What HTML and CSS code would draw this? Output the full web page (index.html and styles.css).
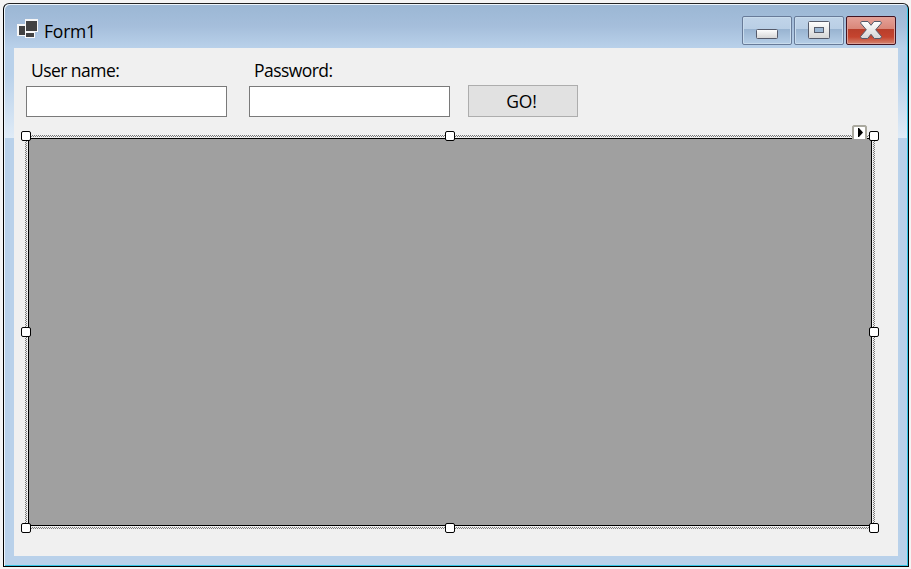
FILE: index.html
```
<!DOCTYPE html>
<html lang="en">
<head>
<meta charset="utf-8">
<title>Form1</title>
<link rel="stylesheet" href="styles.css">
</head>
<body>
<main class="window">
  <header class="titlebar">
    <svg class="app-icon" width="22" height="20" viewBox="0 0 22 20" shape-rendering="crispEdges">
      <path fill="#f7f7f7" d="M0 5h8V0h13v13h-3v6H8v-2H0z"/>
      <path fill="#424242" d="M9 2h11v10H9zM2 7h6v9H2zM9 14h8v4H9z"/>
    </svg>
    <h1 class="title">Form1</h1>
    <div class="controls">
      <button class="control" aria-label="Minimize">
        <svg width="50" height="29" viewBox="0 0 50 29"><defs><linearGradient id="metal" x2="0" y2="1"><stop stop-color="#fff"/><stop offset="1" stop-color="#d4d4d4"/></linearGradient></defs><rect x="14.5" y="13.5" width="21" height="9" rx="1" fill="url(#metal)" stroke="#555a6a"/></svg>
      </button>
      <button class="control" aria-label="Maximize">
        <svg width="50" height="29" viewBox="0 0 50 29"><rect x="14.5" y="5.5" width="21" height="17" rx="1" fill="url(#metal)" stroke="#555a6a"/><rect x="20.5" y="11.5" width="9" height="5" fill="#9bb7d4" stroke="#555a6a"/></svg>
      </button>
      <button class="control close" aria-label="Close">
        <svg width="50" height="29" viewBox="0 0 50 29"><path d="M15.5 5.5H22L25 9.3 28 5.5H34.5L35.5 7 29.7 13.8 35.5 20.5 34.5 22.5H28.3L25 18.3 21.7 22.5H15.5L14.5 20.5 20.3 13.8 14.5 7Z" fill="url(#metal)" stroke="#555a6a" stroke-linejoin="round"/></svg>
      </button>
    </div>
  </header>
  <section class="client">
    <div class="login">
      <label class="field"><span class="caption">User name:</span><input class="textbox" type="text"></label>
      <label class="field"><span class="caption">Password:</span><input class="textbox" type="text"></label>
      <button class="go">GO!</button>
    </div>
    <div class="selection">
      <div class="halo"><div class="datagrid"></div></div>
      <svg class="smart-tag" width="15" height="14" viewBox="0 0 15 14">
        <path d="M1 14V2L2 1H13L14 2V14" fill="#fff" stroke="#aaa99f" stroke-width="2"/>
        <path d="M6 3h1l4 4.5-4 4.5H6z" fill="#000"/>
      </svg>
      <i class="handle nw"></i><i class="handle n"></i><i class="handle ne"></i>
      <i class="handle w"></i><i class="handle e"></i>
      <i class="handle sw"></i><i class="handle s"></i><i class="handle se"></i>
    </div>
  </section>
</main>
</body>
</html>
```
FILE: styles.css
```
* { box-sizing: border-box; }
body {
  margin: 0;
  padding: 3px 2px 2px 3px;
  height: 569px;
  overflow: hidden;
  background: #f4f4f4;
  font: 17.5px "Open Sans", "Noto Sans", sans-serif;
  letter-spacing: -0.55px;
  color: #000;
}
.window {
  width: 906px;
  height: 564px;
  padding: 0 9px 9px 10px;
  border: 1px solid #000;
  border-radius: 6px 6px 0 0;
  border-top-color: #222;
  background:
    linear-gradient(#9bb7d4, #a5bedb 22px, #b9d1ea 44px, #b9d1ea 70px, #dfebf7 134px, #b9d1ea 134px);
  box-shadow: inset 1px 1px #edf5fc, inset -1px -1px #35c5e5;
}
.titlebar {
  height: 44px;
  display: flex;
  align-items: flex-start;
  padding: 12px 3px 0 3px;
}
.app-icon { margin-top: 3px; }
.title {
  margin: 3px 0 0 5px;
  font-size: 17.5px;
  line-height: 24px;
  font-weight: 400;
  letter-spacing: -0.2px;
}
.controls { display: flex; gap: 2px; margin-left: auto; }
.control {
  width: 50px;
  height: 29px;
  padding: 0;
  border: 1px solid #687b99;
  border-radius: 2px;
  background: linear-gradient(#c1d4e9, #b9cee5 12px, #98b3d0 12px, #b6cee7);
  box-shadow: inset 0 0 0 1px #c9dced;
}
.control svg { display: block; margin: -1px; }
.close {
  border-color: #431422;
  background: linear-gradient(#e5a198, #d98678 12px, #b83e2b 12px, #c5442f 20px, #d48670);
  box-shadow: inset 0 0 0 1px #dfa097;
}
.client {
  width: 884px;
  height: 508px;
  padding: 11px 12px 0 11px;
  background: #f0f0f0;
}
.login { display: flex; align-items: flex-end; height: 58px; padding-left: 1px; }
.field { display: flex; flex-direction: column; width: 201px; margin-right: 22px; }
.caption { height: 27px; padding-left: 5px; line-height: 22px; }
.textbox {
  width: 201px;
  height: 31px;
  border: 1px solid #7a7a7a;
  background: #fff;
}
.field + .field { margin-right: 18px; }
.go {
  width: 110px;
  height: 32px;
  padding: 0 3px 1px 0;
  border: 1px solid #adadad;
  background: #e1e1e1;
  color: #000;
  font: inherit;
  letter-spacing: -0.2px;
}
.selection { position: relative; width: 850px; height: 394px; margin-top: 18px; }
.halo {
  width: 850px;
  height: 394px;
  padding: 2px;
  background: #f0f0f0 conic-gradient(#777 25%, #f0f0f0 0 50%, #777 0 75%, #f0f0f0 0) 0 0 / 2px 2px;
}
.datagrid {
  width: 844px;
  height: 388px;
  margin: 1px;
  border: 1px solid #000;
  background: #a0a0a0;
  outline: 1px solid #f0f0f0;
}
.handle {
  position: absolute;
  width: 10px;
  height: 10px;
  border: 1px solid #000;
  border-radius: 2px;
  background: #fff;
}
.nw, .n, .ne { top: -4px; }
.w, .e { top: 192px; }
.sw, .s, .se { top: 388px; }
.nw, .w, .sw { left: -4px; }
.n, .s { left: 420px; }
.ne, .e, .se { left: 844px; }
.smart-tag { position: absolute; left: 827px; top: -10px; }
```
